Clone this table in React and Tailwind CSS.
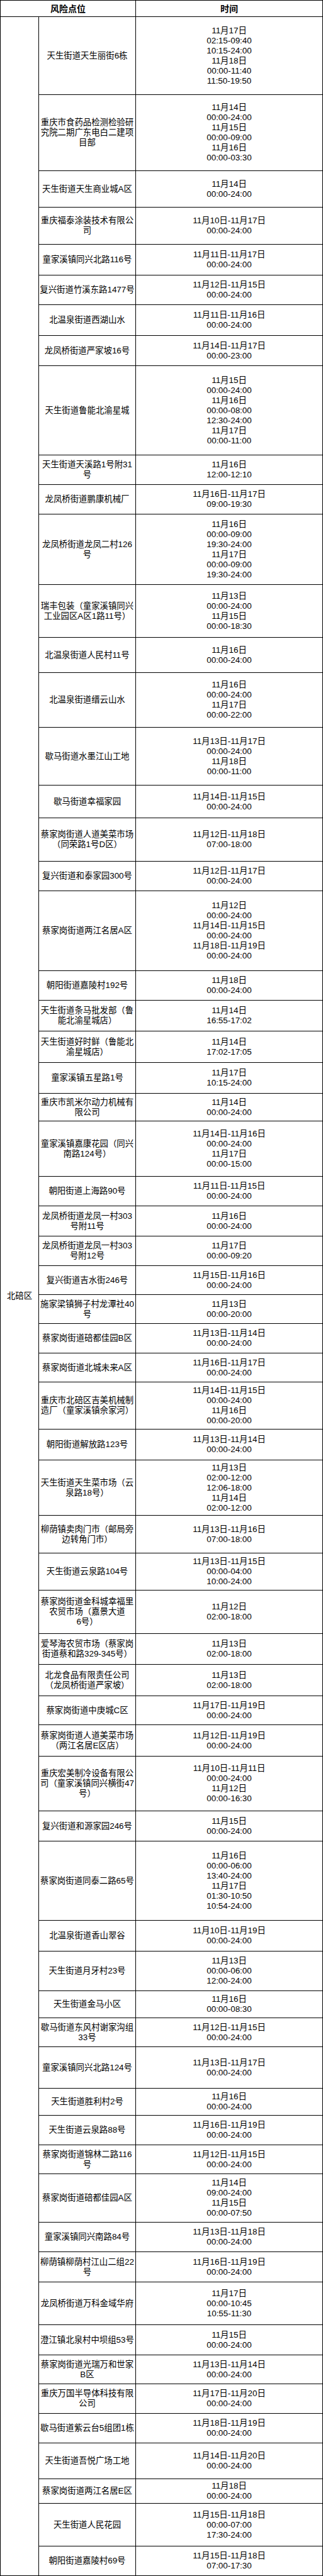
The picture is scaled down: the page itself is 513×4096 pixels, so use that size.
import React from 'react'

// row bottoms are in the reference's px, scaled at runtime
const S = 0.839
const R = (v) => Math.round(v * S)
const HEAD = 30.7

const rows = [
  { loc: ['天生街道天生丽街6栋'], time: ['11月17日', '02:15-09:40', '10:15-24:00', '11月18日', '00:00-11:40', '11:50-19:50'], end: 179.3 },
  { loc: ['重庆市食药品检测检验研', '究院二期广东电白二建项', '目部'], time: ['11月14日', '00:00-24:00', '11月15日', '00:00-09:00', '11月16日', '00:00-03:30'], end: 323.3 },
  { loc: ['天生街道天生商业城A区'], time: ['11月14日', '00:00-24:00'], end: 392.3 },
  { loc: ['重庆福泰涂装技术有限公', '司'], time: ['11月10日-11月17日', '00:00-24:00'], end: 462.3 },
  { loc: ['童家溪镇同兴北路116号'], time: ['11月11日-11月17日', '00:00-24:00'], end: 521.3 },
  { loc: ['复兴街道竹溪东路1477号'], time: ['11月12日-11月15日', '00:00-24:00'], end: 577.3 },
  { loc: ['北温泉街道西湖山水'], time: ['11月11日-11月16日', '00:00-24:00'], end: 635 },
  { loc: ['龙凤桥街道严家坡16号'], time: ['11月14日-11月17日', '00:00-23:00'], end: 693 },
  { loc: ['天生街道鲁能北渝星城'], time: ['11月15日', '00:00-24:00', '11月16日', '00:00-08:00', '12:30-24:00', '11月17日', '00:00-11:00'], end: 861.7 },
  { loc: ['天生街道天溪路1号附31', '号'], time: ['11月16日', '12:00-12:10'], end: 918.3 },
  { loc: ['龙凤桥街道鹏康机械厂'], time: ['11月16日-11月17日', '09:00-19:30'], end: 973.3 },
  { loc: ['龙凤桥街道龙凤二村126', '号'], time: ['11月16日', '00:00-09:00', '19:30-24:00', '11月17日', '00:00-09:00', '19:30-24:00'], end: 1107 },
  { loc: ['瑞丰包装（童家溪镇同兴', '工业园区A区1路11号）'], time: ['11月13日', '00:00-24:00', '11月15日', '00:00-18:30'], end: 1207.3 },
  { loc: ['北温泉街道人民村11号'], time: ['11月16日', '00:00-24:00'], end: 1274.3 },
  { loc: ['北温泉街道缙云山水'], time: ['11月16日', '00:00-24:00', '11月17日', '00:00-22:00'], end: 1378.3 },
  { loc: ['歇马街道水墨江山工地'], time: ['11月13日-11月17日', '00:00-24:00', '11月18日', '00:00-11:00'], end: 1487.3 },
  { loc: ['歇马街道幸福家园'], time: ['11月14日-11月15日', '00:00-24:00'], end: 1549 },
  { loc: ['蔡家岗街道人道美菜市场', '（同荣路1号D区）'], time: ['11月12日-11月18日', '07:00-18:00'], end: 1631.7 },
  { loc: ['复兴街道和泰家园300号'], time: ['11月12日-11月17日', '00:00-24:00'], end: 1687.7 },
  { loc: ['蔡家岗街道两江名居A区'], time: ['11月12日', '00:00-24:00', '11月14日-11月15日', '00:00-24:00', '11月18日-11月19日', '00:00-24:00'], end: 1838.7 },
  { loc: ['朝阳街道嘉陵村192号'], time: ['11月18日', '00:00-24:00'], end: 1895.7 },
  { loc: ['天生街道条马批发部（鲁', '能北渝星城店）'], time: ['11月14日', '16:55-17:02'], end: 1953.3 },
  { loc: ['天生街道好时鲜（鲁能北', '渝星城店）'], time: ['11月14日', '17:02-17:05'], end: 2013.3 },
  { loc: ['童家溪镇五星路1号'], time: ['11月17日', '10:15-24:00'], end: 2071.3 },
  { loc: ['重庆市凯米尔动力机械有', '限公司'], time: ['11月14日', '00:00-24:00'], end: 2124.3 },
  { loc: ['童家溪镇嘉康花园（同兴', '南路124号）'], time: ['11月14日-11月16日', '00:00-24:00', '11月17日', '00:00-15:00'], end: 2228.3 },
  { loc: ['朝阳街道上海路90号'], time: ['11月11日-11月15日', '00:00-24:00'], end: 2285.3 },
  { loc: ['龙凤桥街道龙凤一村303', '号附11号'], time: ['11月16日', '00:00-24:00'], end: 2342.3 },
  { loc: ['龙凤桥街道龙凤一村303', '号附12号'], time: ['11月17日', '00:00-09:20'], end: 2397.7 },
  { loc: ['复兴街道吉水街246号'], time: ['11月15日-11月16日', '00:00-24:00'], end: 2452.7 },
  { loc: ['施家梁镇狮子村龙潭社40', '号'], time: ['11月13日', '00:00-20:00'], end: 2507.7 },
  { loc: ['蔡家岗街道碚都佳园B区'], time: ['11月13日-11月14日', '00:00-24:00'], end: 2563.3 },
  { loc: ['蔡家岗街道北城未来A区'], time: ['11月16日-11月17日', '00:00-24:00'], end: 2618.7 },
  { loc: ['重庆市北碚区吉美机械制', '造厂（童家溪镇佘家河）'], time: ['11月14日-11月15日', '00:00-24:00', '11月16日', '00:00-20:00'], end: 2708.3 },
  { loc: ['朝阳街道解放路123号'], time: ['11月13日-11月14日', '00:00-24:00'], end: 2766.7 },
  { loc: ['天生街道天生菜市场（云', '泉路18号）'], time: ['11月13日', '02:00-12:00', '12:06-18:00', '11月14日', '02:00-12:00'], end: 2871.7 },
  { loc: ['柳荫镇卖肉门市（邮局旁', '边转角门市）'], time: ['11月13日-11月16日', '07:00-18:00'], end: 2943.3 },
  { loc: ['天生街道云泉路104号'], time: ['11月13日-11月15日', '00:00-04:00', '10:00-24:00'], end: 3013.3 },
  { loc: ['蔡家岗街道金科城幸福里', '农贸市场（嘉景大道', '6号）'], time: ['11月12日', '02:00-18:00'], end: 3095.3 },
  { loc: ['爱琴海农贸市场（蔡家岗', '街道蔡和路329-345号）'], time: ['11月13日', '02:00-18:00'], end: 3154.3 },
  { loc: ['北龙食品有限责任公司', '（龙凤桥街道严家坡）'], time: ['11月13日', '02:00-18:00'], end: 3213.3 },
  { loc: ['蔡家岗街道中庚城C区'], time: ['11月17日-11月19日', '00:00-24:00'], end: 3268.3 },
  { loc: ['蔡家岗街道人道美菜市场', '（两江名居E区店）'], time: ['11月12日-11月19日', '00:00-24:00'], end: 3327.3 },
  { loc: ['重庆宏美制冷设备有限公', '司（童家溪镇同兴横街47', '号）'], time: ['11月10日-11月11日', '00:00-24:00', '11月12日', '00:00-16:30'], end: 3431.3 },
  { loc: ['复兴街道和源家园246号'], time: ['11月15日', '00:00-24:00'], end: 3488.3 },
  { loc: ['蔡家岗街道同泰二路65号'], time: ['11月16日', '00:00-06:00', '13:40-24:00', '11月17日', '01:30-10:50', '10:54-24:00'], end: 3639.3 },
  { loc: ['北温泉街道香山翠谷'], time: ['11月10日-11月19日', '00:00-24:00'], end: 3696.7 },
  { loc: ['天生街道月牙村23号'], time: ['11月13日', '00:00-06:00', '12:00-24:00'], end: 3772.3 },
  { loc: ['天生街道金马小区'], time: ['11月16日', '00:00-08:30'], end: 3823.3 },
  { loc: ['歇马街道东风村谢家沟组', '33号'], time: ['11月12日-11月15日', '00:00-24:00'], end: 3878.3 },
  { loc: ['童家溪镇同兴北路124号'], time: ['11月13日-11月17日', '00:00-24:00'], end: 3956.7 },
  { loc: ['天生街道胜利村2号'], time: ['11月16日', '00:00-24:00'], end: 4008.3 },
  { loc: ['天生街道云泉路88号'], time: ['11月16日-11月19日', '00:00-24:00'], end: 4064.3 },
  { loc: ['蔡家岗街道锦林二路116', '号'], time: ['11月12日-11月15日', '00:00-24:00'], end: 4119.3 },
  { loc: ['蔡家岗街道碚都佳园A区'], time: ['11月14日', '09:00-24:00', '11月15日', '00:00-07:50'], end: 4211.3 },
  { loc: ['童家溪镇同兴南路84号'], time: ['11月13日-11月18日', '00:00-24:00'], end: 4267.3 },
  { loc: ['柳荫镇柳荫村江山二组22', '号'], time: ['11月16日-11月19日', '00:00-24:00'], end: 4324.3 },
  { loc: ['龙凤桥街道万科金域华府'], time: ['11月17日', '00:00-10:45', '10:55-11:30'], end: 4405.3 },
  { loc: ['澄江镇北泉村中坝组53号'], time: ['11月15日', '00:00-24:00'], end: 4462.3 },
  { loc: ['蔡家岗街道光瑞万和世家', 'B区'], time: ['11月13日-11月14日', '00:00-24:00'], end: 4517.3 },
  { loc: ['重庆万国半导体科技有限', '公司'], time: ['11月17日-11月20日', '00:00-24:00'], end: 4573.3 },
  { loc: ['歇马街道紫云台5组团1栋'], time: ['11月18日-11月19日', '00:00-24:00'], end: 4629.3 },
  { loc: ['天生街道吾悦广场工地'], time: ['11月14日-11月20日', '00:00-24:00'], end: 4697.3 },
  { loc: ['蔡家岗街道两江名居E区'], time: ['11月18日', '00:00-24:00'], end: 4744.3 },
  { loc: ['天生街道人民花园'], time: ['11月15日-11月18日', '00:00-07:00', '17:30-24:00'], end: 4825.3 },
  { loc: ['朝阳街道嘉陵村69号'], time: ['11月15日-11月18日', '07:00-17:30'], end: 4880.3 },
]

const Row = ({ row, i }) => {
  const top = i === 0 ? R(HEAD) + 1 : R(rows[i - 1].end)
  const height = R(row.end) - top
  return (
    <div className={`flex ${i === 0 ? '' : 'border-t border-black'}`} style={{ height }}>
      <div className="w-[154px] shrink-0 border-r border-black flex flex-col items-center justify-center text-center">
        {row.loc.map((l, k) => (
          <div key={k} className="whitespace-nowrap">{l}</div>
        ))}
      </div>
      <div className="flex-1 flex flex-col items-center justify-center">
        {row.time.map((t, k) => (
          <div key={k} className="whitespace-nowrap">{t}</div>
        ))}
      </div>
    </div>
  )
}

const App = () => {
  return (
    <div className="w-[513px] bg-white text-black border border-black font-['Liberation_Sans','Noto_Sans_CJK_SC',sans-serif] text-[13.4px] leading-[16px]">
      {/* Header */}
      <div className="flex border-b border-black font-bold text-[14px]" style={{ height: R(HEAD) }}>
        <div className="w-[215px] shrink-0 border-r border-black flex items-center justify-center">风险点位</div>
        <div className="flex-1 flex items-center justify-center">时间</div>
      </div>

      {/* Body */}
      <div className="flex">
        <div className="w-[61px] shrink-0 border-r border-black flex items-center justify-center">
          北碚区
        </div>
        <div className="flex-1 flex flex-col">
          {rows.map((row, i) => (
            <Row key={i} row={row} i={i} />
          ))}
        </div>
      </div>
    </div>
  )
}

export default App
